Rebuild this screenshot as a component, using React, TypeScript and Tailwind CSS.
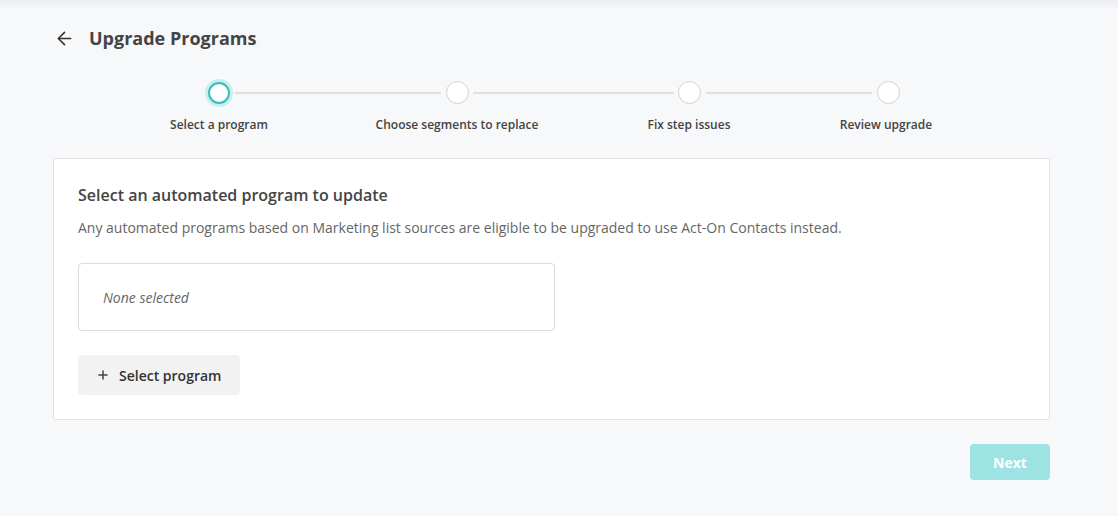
import { ArrowLeft, Plus } from "lucide-react"

const labels = [
  { text: "Select a program", gap: "ml-0" },
  { text: "Choose segments to replace", gap: "ml-[48px]" },
  { text: "Fix step issues", gap: "ml-[42px]" },
  { text: "Review upgrade", gap: "ml-[7px]" },
]

export default function App() {
  return (
    <div className="min-h-screen bg-[#f7f8fa] font-['Open_Sans',sans-serif] text-[#444]">
      {/* header shadow */}
      <div className="h-[10px] bg-gradient-to-b from-[#eceef1] to-[#f7f8fa]" />

      <div className="pl-[53px] pr-[68px] pt-[16px]">
        {/* Title */}
        <div className="flex items-center h-6">
          <ArrowLeft className="w-[21px] h-[21px] text-[#333] ml-[1px]" strokeWidth={1.8} />
          <h1 className="ml-[14px] text-[18px] font-bold text-[#444] leading-6">Upgrade Programs</h1>
        </div>

        {/* Stepper circles */}
        <div className="flex items-center mt-[31px] ml-[155px]">
          <div className="w-[22px] h-[22px] rounded-full bg-white border-2 border-[#3bbcbc] shadow-[0_0_0_3px_#c8eeee]" />
          <div className="w-[206px] h-[2px] bg-[#e0e0e0] mx-[5px]" />
          <div className="w-[23px] h-[23px] rounded-full bg-white border-[1.5px] border-[#d2d2d2]" />
          <div className="w-[201px] h-[2px] bg-[#e0e0e0] mx-[4px]" />
          <div className="w-[23px] h-[23px] rounded-full bg-white border-[1.5px] border-[#d2d2d2]" />
          <div className="w-[166px] h-[2px] bg-[#e0e0e0] mx-[5px]" />
          <div className="w-[23px] h-[23px] rounded-full bg-white border-[1.5px] border-[#d2d2d2]" />
        </div>

        {/* Stepper labels */}
        <div className="flex mt-[13px] ml-[71px]">
          {labels.map(l => (
            <div key={l.text} className={`w-[190px] text-center text-[12px] font-semibold leading-4 text-[#444] ${l.gap}`}>
              {l.text}
            </div>
          ))}
        </div>

        {/* Card */}
        <div className="mt-[25px] bg-white border border-[#e3e3e3] rounded-[3px] px-[24px] pt-[25px] pb-[24px]">
          <h2 className="text-[16px] font-semibold leading-[22px] text-[#444]">Select an automated program to update</h2>
          <p className="mt-[12px] text-[14px] leading-5 text-[#666]">
            Any automated programs based on Marketing list sources are eligible to be upgraded to use Act-On Contacts instead.
          </p>
          <div className="mt-[25px] w-[477px] h-[68px] border border-[#dcdcdc] rounded-[4px] flex items-center pl-[24px]">
            <span className="text-[14px] italic text-[#666]">None selected</span>
          </div>
          <button className="mt-[24px] w-[162px] h-[40px] rounded-[4px] bg-[#f2f2f2] flex items-center pl-[18px] text-[14px] font-semibold text-[#333]">
            <Plus className="w-[14px] h-[14px] text-[#444]" strokeWidth={2.6} />
            <span className="ml-[9px]">Select program</span>
          </button>
        </div>

        {/* Footer */}
        <div className="flex justify-end mt-[24px]">
          <button className="w-[80px] h-[36px] rounded-[4px] bg-[#9de3e3] text-white text-[14px] font-bold">Next</button>
        </div>
      </div>
    </div>
  )
}
